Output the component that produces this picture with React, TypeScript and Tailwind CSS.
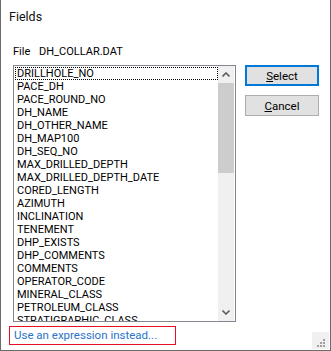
import React from "react";

const items = [
  "DRILLHOLE_NO",
  "PACE_DH",
  "PACE_ROUND_NO",
  "DH_NAME",
  "DH_OTHER_NAME",
  "DH_MAP100",
  "DH_SEQ_NO",
  "MAX_DRILLED_DEPTH",
  "MAX_DRILLED_DEPTH_DATE",
  "CORED_LENGTH",
  "AZIMUTH",
  "INCLINATION",
  "TENEMENT",
  "DHP_EXISTS",
  "DHP_COMMENTS",
  "COMMENTS",
  "OPERATOR_CODE",
  "MINERAL_CLASS",
  "PETROLEUM_CLASS",
  "STRATIGRAPHIC_CLASS",
];

export default function App() {
  return (
    <div
      className="relative w-[331px] h-[351px] bg-white border-l border-r border-b border-[#6b6b6b] flex flex-col text-black"
      style={{ fontFamily: "Roboto, 'Liberation Sans', sans-serif" }}
    >
      <div className="pl-[8px] pt-[9px] h-[40px] text-[12.5px] leading-[16px] text-[#111]">Fields</div>
      <div className="pl-[12px] h-[25px] flex text-[11px] leading-[14px] pt-[5px]">
        <span className="w-[26px]">File</span>
        <span>DH_COLLAR.DAT</span>
      </div>
      <div className="flex">
        <div className="ml-[12px] w-[223px] h-[257px] border border-[#828790] flex overflow-hidden">
          <div className="flex-1 pt-[1px] pl-[1px] overflow-hidden">
            {items.map((it, i) => (
              <div
                key={it}
                className={
                  "h-[13px] text-[11px] leading-[12px] pl-[1px] whitespace-nowrap " +
                  (i === 0 ? "border border-dotted border-black" : "border border-transparent")
                }
              >
                {it}
              </div>
            ))}
          </div>
          <div className="w-[16px] mr-[1px] bg-[#f0f0f0] flex flex-col">
            <div className="h-[17px] flex items-center justify-center">
              <svg width="8" height="5" viewBox="0 0 8 5">
                <polyline points="0.5,4.5 4,1 7.5,4.5" fill="none" stroke="#606060" strokeWidth="1.6" />
              </svg>
            </div>
            <div className="h-[90px] bg-[#cdcdcd]" />
            <div className="flex-1" />
            <div className="h-[17px] flex items-center justify-center">
              <svg width="8" height="5" viewBox="0 0 8 5">
                <polyline points="0.5,0.5 4,4 7.5,0.5" fill="none" stroke="#606060" strokeWidth="1.6" />
              </svg>
            </div>
          </div>
        </div>
        <div className="ml-[9px] flex flex-col">
          <button className="w-[74px] h-[21px] border-2 border-[#0078d7] bg-[#e1e1e1] text-[11.5px] leading-[14px]">
            <span className="underline underline-offset-1">S</span>elect
          </button>
          <button className="mt-[9px] w-[74px] h-[21px] border border-[#adadad] bg-[#e1e1e1] text-[11.5px] leading-[14px]">
            <span className="underline underline-offset-1">C</span>ancel
          </button>
        </div>
      </div>
      <div className="ml-[8px] mt-[4px] w-[167px] h-[19px] border border-[#e81123] pl-[4px] text-[11.5px] leading-[16px] text-[#2a73c8]">
        Use an expression instead...
      </div>
      <div className="absolute right-[1px] bottom-[1px] w-[17px] h-[17px] bg-[#f0f0f0]">
        <div className="absolute w-[2px] h-[2px] bg-[#a0a0a0] left-[11px] top-[7px]" />
        <div className="absolute w-[2px] h-[2px] bg-[#a0a0a0] left-[8px] top-[10px]" />
        <div className="absolute w-[2px] h-[2px] bg-[#a0a0a0] left-[11px] top-[10px]" />
        <div className="absolute w-[2px] h-[2px] bg-[#a0a0a0] left-[5px] top-[13px]" />
        <div className="absolute w-[2px] h-[2px] bg-[#a0a0a0] left-[8px] top-[13px]" />
        <div className="absolute w-[2px] h-[2px] bg-[#a0a0a0] left-[11px] top-[13px]" />
      </div>
    </div>
  );
}
